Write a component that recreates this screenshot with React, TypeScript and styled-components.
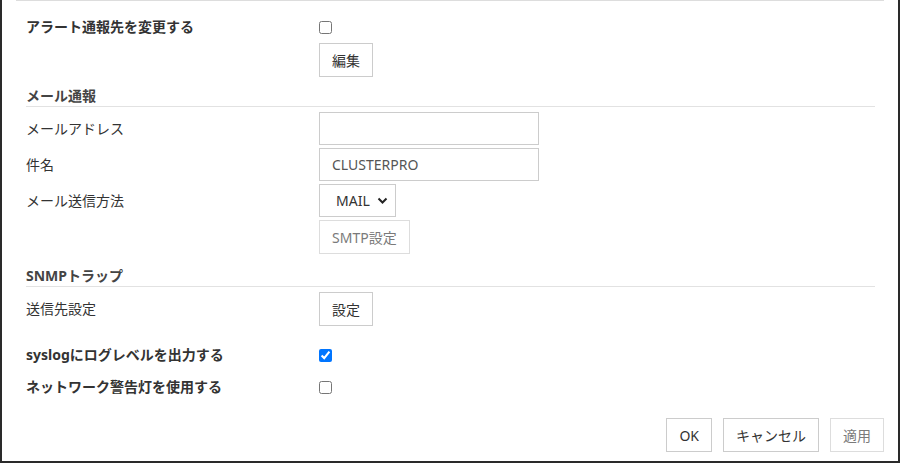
import styled, { createGlobalStyle } from "styled-components";

const GlobalStyle = createGlobalStyle`
    html, body {
        margin: 0;
        padding: 0;
        background: #ffffff;
    }
    body {
        font-family: "Noto Sans", "Noto Sans CJK JP", sans-serif;
        font-size: 14px;
        color: #333333;
    }
`

const Frame = styled.div`
    box-sizing: border-box;
    width: 900px;
    height: 463px;
    overflow: hidden;
    border-left: 2px solid #2a2a2a;
    border-right: 2px solid #2a2a2a;
    border-bottom: 2px solid #2a2a2a;
    background: #ffffff;
`

const Content = styled.div`
    margin: 0 14px;
    border-top: 1px solid #dddddd;
    display: flex;
    flex-direction: column;
`

const Form = styled.div`
    padding: 10px 9px 0 10px;
    display: flex;
    flex-direction: column;
`

const Row = styled.div<{ h?: number; gap?: number }>`
    display: grid;
    grid-template-columns: 293px 1fr;
    align-items: center;
    min-height: ${(p) => p.h ?? 32}px;
    margin-bottom: ${(p) => p.gap ?? 0}px;
`

const Label = styled.div<{ bold?: boolean }>`
    font-size: 14px;
    line-height: 20px;
    font-weight: ${(p) => (p.bold ? 700 : 400)};
    color: #333333;
    white-space: nowrap;
`

const SectionHeader = styled.div<{ top: number }>`
    margin-top: ${(p) => p.top}px;
    margin-bottom: 5px;
    height: 20px;
    line-height: 20px;
    font-size: 14px;
    font-weight: 700;
    color: #444444;
    border-bottom: 1px solid #e2e2e2;
`

const Check = styled.input`
    margin: 0;
    width: 13px;
    height: 13px;
`

const Button = styled.button`
    box-sizing: border-box;
    height: 34px;
    padding: 0 12px;
    background: #ffffff;
    border: 1px solid #cccccc;
    border-radius: 0;
    font-family: inherit;
    font-size: 14px;
    color: #333333;
    justify-self: start;
    cursor: pointer;
    &:disabled {
        color: #7a7a7a;
        border-color: #dddddd;
        cursor: default;
    }
`

const TextInput = styled.input`
    box-sizing: border-box;
    width: 220px;
    height: 33px;
    padding: 0 12px;
    border: 1px solid #cccccc;
    border-radius: 0;
    font-family: inherit;
    font-size: 14px;
    color: #555555;
    outline: none;
`

const SelectWrap = styled.div`
    position: relative;
    width: 77px;
    height: 33px;
`

const Select = styled.select`
    box-sizing: border-box;
    appearance: none;
    width: 100%;
    height: 100%;
    padding: 0 0 0 16px;
    border: 1px solid #cccccc;
    border-radius: 0;
    background: #ffffff;
    font-family: inherit;
    font-size: 14px;
    color: #333333;
`

const Chevron = styled.svg`
    position: absolute;
    right: 8px;
    top: 13px;
    pointer-events: none;
`

const Footer = styled.div`
    display: flex;
    justify-content: flex-end;
    gap: 11px;
    padding: 15px 0 0 0;
`

function App() {
    return (
        <>
            <GlobalStyle />
            <Frame>
                <Content>
                    <Form>
                        <Row>
                            <Label bold>アラート通報先を変更する</Label>
                            <Check type="checkbox" />
                        </Row>
                        <Row h={34}>
                            <span />
                            <Button>編集</Button>
                        </Row>

                        <SectionHeader top={9}>メール通報</SectionHeader>
                        <Row h={33} gap={3}>
                            <Label>メールアドレス</Label>
                            <TextInput type="text" defaultValue="" />
                        </Row>
                        <Row h={33} gap={3}>
                            <Label>件名</Label>
                            <TextInput type="text" defaultValue="CLUSTERPRO" />
                        </Row>
                        <Row h={33} gap={3}>
                            <Label>メール送信方法</Label>
                            <SelectWrap>
                                <Select defaultValue="MAIL">
                                    <option value="MAIL">MAIL</option>
                                    <option value="SMTP">SMTP</option>
                                </Select>
                                <Chevron width="11" height="8" viewBox="0 0 11 8">
                                    <polyline points="1.5,1.5 5.5,5.5 9.5,1.5" fill="none" stroke="#222" strokeWidth="2" />
                                </Chevron>
                            </SelectWrap>
                        </Row>
                        <Row h={33}>
                            <span />
                            <Button disabled>SMTP設定</Button>
                        </Row>

                        <SectionHeader top={12}>SNMPトラップ</SectionHeader>
                        <Row h={34} gap={13}>
                            <Label>送信先設定</Label>
                            <Button>設定</Button>
                        </Row>

                        <Row>
                            <Label bold>syslogにログレベルを出力する</Label>
                            <Check type="checkbox" defaultChecked />
                        </Row>
                        <Row>
                            <Label bold>ネットワーク警告灯を使用する</Label>
                            <Check type="checkbox" />
                        </Row>
                    </Form>
                    <Footer>
                        <Button>OK</Button>
                        <Button>キャンセル</Button>
                        <Button disabled>適用</Button>
                    </Footer>
                </Content>
            </Frame>
        </>
    );
}

export default App;
